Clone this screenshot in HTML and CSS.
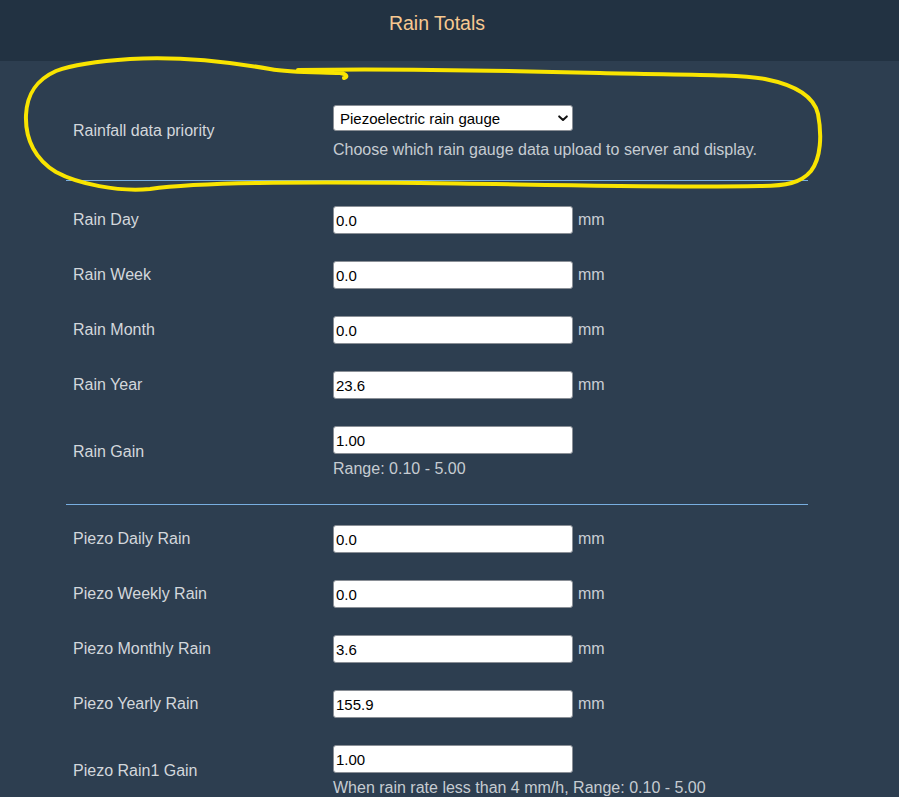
FILE: index.html
```html
<!DOCTYPE html>
<html>
<head>
<meta charset="utf-8">
<title>Rain Totals</title>
<link rel="stylesheet" href="styles.css">
</head>
<body>
<header class="topbar"><h1 class="title">Rain Totals</h1></header>
<main class="panel">
  <div class="row row-priority">
    <div class="label">Rainfall data priority</div>
    <div class="field">
      <div class="select-wrap">
        <select class="select">
          <option>Piezoelectric rain gauge</option>
          <option>Traditional rain gauge</option>
        </select>
        <svg class="chevron" width="10" height="7" viewBox="0 0 10 7"><path d="M1.2 1.4 L5 5 L8.8 1.4" fill="none" stroke="#111" stroke-width="2" stroke-linecap="round" stroke-linejoin="round"/></svg>
      </div>
      <div class="help help-priority">Choose which rain gauge data upload to server and display.</div>
    </div>
  </div>
  <div class="sep sep-first"></div>

  <div class="row"><div class="label">Rain Day</div><div class="field inline"><input class="input" value="0.0"><span class="unit">mm</span></div></div>
  <div class="row"><div class="label">Rain Week</div><div class="field inline"><input class="input" value="0.0"><span class="unit">mm</span></div></div>
  <div class="row"><div class="label">Rain Month</div><div class="field inline"><input class="input" value="0.0"><span class="unit">mm</span></div></div>
  <div class="row"><div class="label">Rain Year</div><div class="field inline"><input class="input" value="23.6"><span class="unit">mm</span></div></div>
  <div class="row"><div class="label">Rain Gain</div><div class="field"><input class="input" value="1.00"><div class="help">Range: 0.10 - 5.00</div></div></div>
  <div class="sep sep-second"></div>

  <div class="row"><div class="label">Piezo Daily Rain</div><div class="field inline"><input class="input" value="0.0"><span class="unit">mm</span></div></div>
  <div class="row"><div class="label">Piezo Weekly Rain</div><div class="field inline"><input class="input" value="0.0"><span class="unit">mm</span></div></div>
  <div class="row"><div class="label">Piezo Monthly Rain</div><div class="field inline"><input class="input" value="3.6"><span class="unit">mm</span></div></div>
  <div class="row"><div class="label">Piezo Yearly Rain</div><div class="field inline"><input class="input" value="155.9"><span class="unit">mm</span></div></div>
  <div class="row"><div class="label">Piezo Rain1 Gain</div><div class="field"><input class="input" value="1.00"><div class="help">When rain rate less than 4 mm/h, Range: 0.10 - 5.00</div></div></div>
</main>

<svg class="annotation" width="899" height="797" viewBox="0 0 899 797">
  <path d="M 298 70
           C 400 68, 520 71, 600 73
           C 680 75, 735 74, 765 79
           C 795 85, 814 96, 818 114
           C 822 135, 821 158, 811 171
           C 801 183, 786 186, 760 186
           C 650 188, 520 184, 420 183
           C 300 182, 200 182, 150 189
           C 118 192, 78 184, 56 172
           C 36 160, 25 140, 26 115
           C 27 94, 36 80, 56 71
           C 72 65, 100 61, 130 59
           C 180 56, 230 62, 270 69
           C 292 73, 322 72, 340 73
           C 347 74, 348 77, 344 78"
        fill="none" stroke="#f9e400" stroke-width="4" stroke-linecap="round" stroke-linejoin="round"/>
</svg>
</body>
</html>
```

FILE: styles.css
```css
html, body {
  margin: 0;
  padding: 0;
}

body {
  width: 899px;
  height: 797px;
  overflow: hidden;
  background: #2d3e50;
  font-family: "Liberation Sans", Arial, sans-serif;
  position: relative;
}

.topbar {
  height: 61px;
  background: #223242;
  box-sizing: border-box;
  padding-right: 25px;
  display: flex;
  justify-content: center;
}

.title {
  margin: 0;
  padding-top: 12px;
  font-size: 19.5px;
  font-weight: normal;
  line-height: 23px;
  color: #f7c891;
}

.panel {
  width: 742px;
  margin-left: 66px;
}

.row {
  display: flex;
  align-items: center;
  padding: 13px 0 14px;
}

.row-priority {
  padding: 44px 0 21px;
}

.row-priority .label {
  padding-bottom: 3px;
}

.label {
  width: 267px;
  flex: none;
  box-sizing: border-box;
  padding-left: 7px;
  font-size: 16px;
  color: #d3d7dc;
}

.field {
  display: flex;
  flex-direction: column;
  align-items: flex-start;
}

.field.inline {
  flex-direction: row;
  align-items: center;
}

.input {
  width: 240px;
  height: 28px;
  box-sizing: border-box;
  margin: 0;
  padding: 0 2px;
  border: 1px solid #8a8f96;
  border-radius: 3px;
  background: #fff;
  color: #000;
  font-family: "Liberation Sans", Arial, sans-serif;
  font-size: 15px;
}

.unit {
  margin-left: 5px;
  font-size: 16px;
  color: #c9ced4;
}

.select-wrap {
  position: relative;
  width: 240px;
  height: 26px;
}

.select {
  appearance: none;
  -webkit-appearance: none;
  width: 240px;
  height: 26px;
  box-sizing: border-box;
  margin: 0;
  padding: 0 0 0 6px;
  border: 1px solid #8a8f96;
  border-radius: 3px;
  background: #fff;
  color: #000;
  font-family: "Liberation Sans", Arial, sans-serif;
  font-size: 15px;
}

.chevron {
  position: absolute;
  right: 5px;
  top: 10px;
  pointer-events: none;
}

.help {
  margin-top: 6px;
  font-size: 16px;
  line-height: 18px;
  color: #c6ccd2;
}

.help-priority {
  margin-top: 10px;
}

.sep {
  height: 1px;
  background: #78aee0;
}

.sep-first {
  margin-bottom: 12px;
}

.sep-second {
  margin-top: 12px;
  margin-bottom: 7px;
}

.annotation {
  position: absolute;
  left: 0;
  top: 0;
  pointer-events: none;
}
```
